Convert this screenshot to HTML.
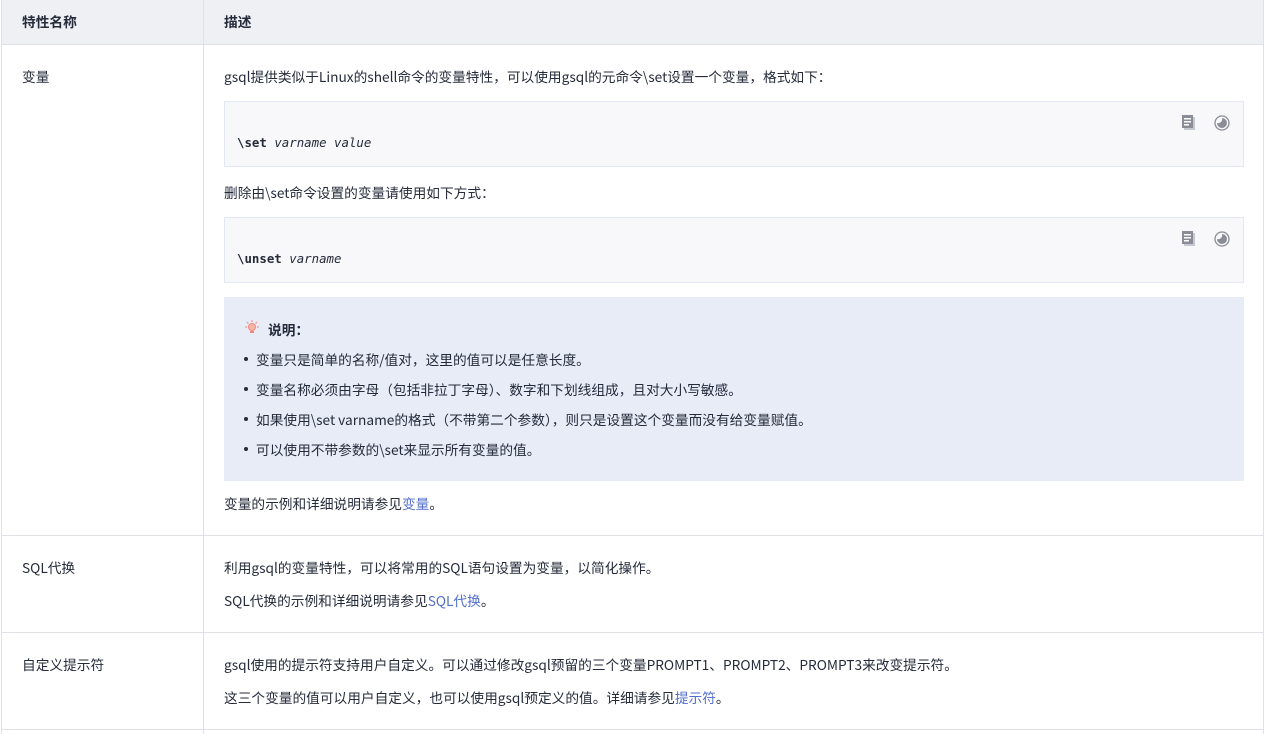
<!DOCTYPE html>
<html><head><meta charset="utf-8"><style>
*{margin:0;padding:0;box-sizing:border-box}
body{width:1265px;height:734px;overflow:hidden;background:#fff;position:relative;font-family:"Noto Sans CJK SC","Liberation Sans",sans-serif;font-size:13.7px;color:#252b3a}
.a{position:absolute;white-space:nowrap;line-height:18px}
.hl{position:absolute;left:1px;right:1px;height:1px;background:#dfe1e6}
.code{position:absolute;left:224px;width:1020px;height:66px;background:#f8f8fa;border:1px solid #e3e6f3}
.code .t{position:absolute;left:12px;top:33px;font-family:"DejaVu Sans Mono","Liberation Mono",monospace;font-size:12.4px;color:#252b3a}
.code i{font-style:oblique}
.ic{position:absolute;top:13px}
a{color:#526ecc;text-decoration:none}
.b{position:absolute;left:244px;width:4px;height:4px;border-radius:50%;background:#252b3a}
</style></head><body>
<div style="position:absolute;left:1px;top:0;width:1263px;height:44px;background:#eff0f4"></div>
<div style="position:absolute;left:1px;top:0;width:1px;height:734px;background:#dfe1e6"></div>
<div style="position:absolute;left:1263px;top:0;width:1px;height:734px;background:#dfe1e6"></div>
<div style="position:absolute;left:203px;top:0;width:1px;height:734px;background:#dfe1e6"></div>
<div class="hl" style="top:44px"></div>
<div class="hl" style="top:535px"></div>
<div class="hl" style="top:632px"></div>
<div class="hl" style="top:729px"></div>
<div class="a" style="left:22px;top:12px;font-weight:bold">特性名称</div>
<div class="a" style="left:224px;top:12px;font-weight:bold">描述</div>

<div class="a" style="left:22px;top:67px">变量</div>
<div class="a" style="left:224px;top:67px">gsql提供类似于Linux的shell命令的变量特性，可以使用gsql的元命令\set设置一个变量，格式如下：</div>
<div class="code" style="top:101px"><div class="t"><b>\set</b> <i>varname value</i></div>
<svg class="ic" style="left:957px" width="14" height="16" viewBox="0 0 14 16"><rect x="2" y="2" width="11" height="13" fill="#c5c8d0"/><rect x="0" y="0" width="11" height="13" fill="#8a8d95"/><rect x="2" y="3" width="7" height="1.5" fill="#fff"/><rect x="2" y="6" width="7" height="1.5" fill="#fff"/><rect x="2" y="9" width="5" height="1.5" fill="#fff"/></svg>
<svg class="ic" style="left:989px" width="16" height="16" viewBox="0 0 16 16"><circle cx="8" cy="8" r="7" fill="none" stroke="#8a8d95" stroke-width="1.3"/><path d="M8 3a5 5 0 1 1 -5 5a4 4 0 0 0 5 -5z" fill="#8a8d95"/></svg></div>
<div class="a" style="left:224px;top:183px">删除由\set命令设置的变量请使用如下方式：</div>
<div class="code" style="top:217px"><div class="t"><b>\unset</b> <i>varname</i></div>
<svg class="ic" style="left:957px" width="14" height="16" viewBox="0 0 14 16"><rect x="2" y="2" width="11" height="13" fill="#c5c8d0"/><rect x="0" y="0" width="11" height="13" fill="#8a8d95"/><rect x="2" y="3" width="7" height="1.5" fill="#fff"/><rect x="2" y="6" width="7" height="1.5" fill="#fff"/><rect x="2" y="9" width="5" height="1.5" fill="#fff"/></svg>
<svg class="ic" style="left:989px" width="16" height="16" viewBox="0 0 16 16"><circle cx="8" cy="8" r="7" fill="none" stroke="#8a8d95" stroke-width="1.3"/><path d="M8 3a5 5 0 1 1 -5 5a4 4 0 0 0 5 -5z" fill="#8a8d95"/></svg></div>
<div style="position:absolute;left:224px;top:297px;width:1020px;height:184px;background:#e8ecf7"></div>
<svg style="position:absolute;left:245px;top:320px" width="14" height="14" viewBox="0 0 14 14"><circle cx="7" cy="7" r="3.5" fill="#f8b5a8" stroke="#ee8a7a"/><g stroke="#ee8a7a" stroke-width="1"><path d="M7 0v2M0 7h2M12 7h2M2 2l1.4 1.4M12 2l-1.4 1.4"/></g><rect x="5" y="11" width="4" height="2" fill="#ee8a7a"/></svg>
<div class="a" style="left:268px;top:320px;font-weight:bold">说明：</div>
<div class="b" style="top:357px"></div><div class="a" style="left:256px;top:350px">变量只是简单的名称/值对，这里的值可以是任意长度。</div>
<div class="b" style="top:387px"></div><div class="a" style="left:256px;top:380px">变量名称必须由字母（包括非拉丁字母）、数字和下划线组成，且对大小写敏感。</div>
<div class="b" style="top:417px"></div><div class="a" style="left:256px;top:410px">如果使用\set varname的格式（不带第二个参数），则只是设置这个变量而没有给变量赋值。</div>
<div class="b" style="top:447px"></div><div class="a" style="left:256px;top:440px">可以使用不带参数的\set来显示所有变量的值。</div>
<div class="a" style="left:224px;top:494px">变量的示例和详细说明请参见<a>变量</a>。</div>

<div class="a" style="left:22px;top:558px">SQL代换</div>
<div class="a" style="left:224px;top:558px">利用gsql的变量特性，可以将常用的SQL语句设置为变量，以简化操作。</div>
<div class="a" style="left:224px;top:591px">SQL代换的示例和详细说明请参见<a>SQL代换</a>。</div>

<div class="a" style="left:22px;top:655px">自定义提示符</div>
<div class="a" style="left:224px;top:655px">gsql使用的提示符支持用户自定义。可以通过修改gsql预留的三个变量PROMPT1、PROMPT2、PROMPT3来改变提示符。</div>
<div class="a" style="left:224px;top:688px">这三个变量的值可以用户自定义，也可以使用gsql预定义的值。详细请参见<a>提示符</a>。</div>
</body></html>
